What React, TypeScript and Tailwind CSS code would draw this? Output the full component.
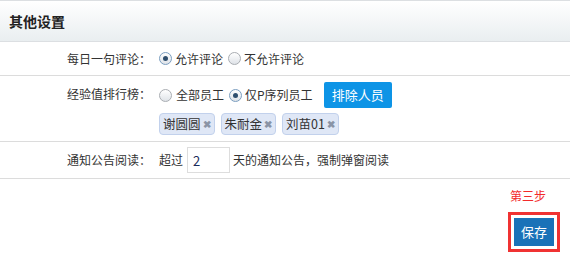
import React from "react";

function Radio({ checked }: { checked?: boolean }) {
  return (
    <span
      className={`inline-flex h-[13px] w-[13px] shrink-0 items-center justify-center rounded-full border bg-gradient-to-b from-[#ffffff] to-[#dfe3e8] ${
        checked ? "border-[#7b9ec0]" : "border-[#a9adb2]"
      }`}
    >
      {checked && <span className="h-[5px] w-[5px] rounded-full bg-[#2f4f6e]" />}
    </span>
  );
}

function Tag({ name }: { name: string }) {
  return (
    <span className="inline-flex h-[22px] items-center gap-[2px] rounded-[4px] border border-[#c2d1ec] bg-[#dfe7f6] pl-[3px] pr-[3px] text-[12.5px] text-[#333]">
      {name}
      <span className="text-[10px] font-bold leading-none text-[#8a94a6]">✖</span>
    </span>
  );
}

export default function App() {
  const font = { fontFamily: '"Noto Sans CJK SC", "Liberation Sans", sans-serif' };

  return (
    <div className="h-[254px] w-[570px] overflow-hidden bg-white text-[12px] text-[#333]" style={font}>
      <div className="flex h-[42px] items-center border-y border-[#dcdfe2] bg-gradient-to-b from-[#ffffff] to-[#e9eef0] pl-[9px]">
        <span className="text-[14px] font-bold text-[#222]">其他设置</span>
      </div>

      <div className="flex h-[34px] items-center border-b border-[#dcdcdc]">
        <div className="w-[151px] text-right">每日一句评论：</div>
        <div className="ml-[8px] flex items-center gap-[3px]">
          <Radio checked />
          <span className="mr-[2px]">允许评论</span>
          <Radio />
          <span>不允许评论</span>
        </div>
      </div>

      <div className="flex h-[66px] border-b border-[#dcdcdc]">
        <div className="w-[151px] pt-[9px] text-right">经验值排行榜：</div>
        <div className="ml-[8px] flex flex-col">
          <div className="mt-[6px] flex items-center">
            <Radio />
            <span className="ml-[4px] mr-[5px]">全部员工</span>
            <Radio checked />
            <span className="ml-[3px]">仅P序列员工</span>
            <button className="ml-[11px] h-[26px] rounded-[2px] bg-[#0d94e6] px-[8px] text-[13px] text-white">
              排除人员
            </button>
          </div>
          <div className="mt-[5px] flex gap-[6px]">
            <Tag name="谢圆圆" />
            <Tag name="朱耐金" />
            <Tag name="刘苗01" />
          </div>
        </div>
      </div>

      <div className="flex h-[37px] items-center border-b border-[#dcdcdc]">
        <div className="w-[151px] text-right">通知公告阅读：</div>
        <div className="ml-[8px] flex items-center">
          <span>超过</span>
          <input
            className="ml-[4px] mr-[3px] h-[26px] w-[43px] border border-[#dddddd] px-[5px] text-[13px] text-[#1a2a5a] outline-none"
            defaultValue="2"
          />
          <span>天的通知公告，强制弹窗阅读</span>
        </div>
      </div>

      <div className="flex flex-col items-end pr-[10px]">
        <span className="mr-[14px] mt-[8px] text-[12px] text-[#f22b2b]">第三步</span>
        <div className="mt-[7px] border-[3px] border-[#f03232] px-[3px] py-[3px]">
          <button className="h-[28px] w-[40px] bg-[#1a72b8] text-[13px] text-white">保存</button>
        </div>
      </div>
    </div>
  );
}
